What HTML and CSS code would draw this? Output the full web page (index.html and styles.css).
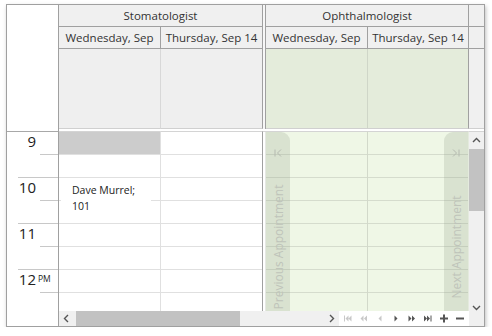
FILE: index.html
```html
<!DOCTYPE html>
<html lang="en">
<head>
    <meta charset="UTF-8">
    <title>Scheduler</title>
    <link rel="stylesheet" href="styles.css">
</head>
<body>
    <div class="scheduler">
        <div class="head">
            <div class="ruler-head"></div>
            <div class="res res-stom">Stomatologist</div>
            <div class="res-gap"></div>
            <div class="res res-oph">Ophthalmologist</div>
            <div class="sb-cell sb-r1"></div>

            <div class="date d1">Wednesday, Sep</div>
            <div class="date d2 edge">Thursday, Sep 14</div>
            <div class="date d3">Wednesday, Sep</div>
            <div class="date d4 edge">Thursday, Sep 14</div>
            <div class="sb-cell sb-r2"></div>

            <div class="allday a1"></div>
            <div class="allday a2 edge"></div>
            <div class="allday a3 green"></div>
            <div class="allday a4 green edge"></div>
            <div class="sb-cell sb-r3"></div>
        </div>

        <div class="body">
            <div class="ruler">
                <div class="hour">
                    <div class="hour-top"><span class="num">9</span></div>
                </div>
                <div class="hour">
                    <div class="hour-top"><span class="num">10</span></div>
                </div>
                <div class="hour">
                    <div class="hour-top"><span class="num">11</span></div>
                </div>
                <div class="hour">
                    <div class="hour-top"><span class="num">12</span><span class="ampm">PM</span></div>
                </div>
            </div>

            <div class="col">
                <div class="slot selected"></div>
                <div class="slot"></div>
                <div class="slot"></div>
                <div class="slot"></div>
                <div class="slot"></div>
                <div class="slot"></div>
                <div class="slot"></div>
                <div class="slot"></div>
                <div class="appt">Dave Murrel;<br>101</div>
            </div>
            <div class="col edge">
                <div class="slot"></div>
                <div class="slot"></div>
                <div class="slot"></div>
                <div class="slot"></div>
                <div class="slot"></div>
                <div class="slot"></div>
                <div class="slot"></div>
                <div class="slot"></div>
            </div>
            <div class="col-gap"></div>
            <div class="col green">
                <div class="slot"></div>
                <div class="slot"></div>
                <div class="slot"></div>
                <div class="slot"></div>
                <div class="slot"></div>
                <div class="slot"></div>
                <div class="slot"></div>
                <div class="slot"></div>
            </div>
            <div class="col green last">
                <div class="slot"></div>
                <div class="slot"></div>
                <div class="slot"></div>
                <div class="slot"></div>
                <div class="slot"></div>
                <div class="slot"></div>
                <div class="slot"></div>
                <div class="slot"></div>
            </div>
            <div class="vscroll">
                <svg class="arrow" width="15" height="16" viewBox="0 0 15 16"><polyline points="4,10 7.5,6.5 11,10" fill="none" stroke="#555" stroke-width="1.4"/></svg>
                <div class="vthumb"></div>
                <div class="vspace"></div>
                <svg class="arrow" width="15" height="16" viewBox="0 0 15 16"><polyline points="4,6 7.5,9.5 11,6" fill="none" stroke="#555" stroke-width="1.4"/></svg>
            </div>

            <div class="nav-tab prev">
                <svg width="10" height="10" viewBox="0 0 10 10"><path d="M2 1.5v7M8 1.5L4.5 5 8 8.5" fill="none" stroke="#b5bab0" stroke-width="1"/></svg>
                <span class="tab-text">Previous Appointment</span>
            </div>
            <div class="nav-tab next">
                <svg width="10" height="10" viewBox="0 0 10 10"><path d="M8 1.5v7M2 1.5L5.5 5 2 8.5" fill="none" stroke="#b5bab0" stroke-width="1"/></svg>
                <span class="tab-text">Next Appointment</span>
            </div>
        </div>

        <div class="foot">
            <div class="ruler-foot"></div>
            <div class="track">
                <svg class="harrow" width="15" height="15" viewBox="0 0 15 15"><polyline points="9,4 5.5,7.5 9,11" fill="none" stroke="#555" stroke-width="1.4"/></svg>
                <div class="hthumb"></div>
                <div class="hspace"></div>
                <svg class="harrow" width="15" height="15" viewBox="0 0 15 15"><polyline points="6,4 9.5,7.5 6,11" fill="none" stroke="#555" stroke-width="1.4"/></svg>
            </div>
            <div class="nav">
                <svg width="16" height="15" viewBox="0 0 16 15"><path d="M4 4.5h1v6H4zM8.5 4.5v6L5.5 7.5zM11.5 4.5v6L8.5 7.5z" fill="#c8c8c8"/></svg>
                <svg width="16" height="15" viewBox="0 0 16 15"><path d="M7.5 4.5v6L4.5 7.5zM11 4.5v6L8 7.5z" fill="#c8c8c8"/></svg>
                <svg width="16" height="15" viewBox="0 0 16 15"><path d="M9.5 4.5v6L6.5 7.5z" fill="#c8c8c8"/></svg>
                <svg width="16" height="15" viewBox="0 0 16 15"><path d="M6.5 4.5v6L9.5 7.5z" fill="#555"/></svg>
                <svg width="16" height="15" viewBox="0 0 16 15"><path d="M4.5 4.5v6L7.5 7.5zM8 4.5v6L11 7.5z" fill="#555"/></svg>
                <svg width="16" height="15" viewBox="0 0 16 15"><path d="M4 4.5v6L7 7.5zM7 4.5v6L10 7.5zM10.5 4.5h1v6h-1z" fill="#555"/></svg>
                <svg width="16" height="15" viewBox="0 0 16 15"><path d="M4 6.5h8v2H4zM7 3.5h2v8H7z" fill="#555"/></svg>
                <svg width="16" height="15" viewBox="0 0 16 15"><path d="M4 6.5h8v2H4z" fill="#555"/></svg>
            </div>
            <div class="corner"></div>
        </div>
    </div>
</body>
</html>
```

FILE: styles.css
```css
body {
    margin: 0;
    padding: 4px 0 0 6px;
    background: #fff;
    font-family: "Open Sans", "Noto Sans", sans-serif;
    color: #333;
}
.scheduler {
    width: 479px;
    height: 323px;
    box-sizing: border-box;
    border: 1px solid #a0a0a0;
    box-shadow: 1px 2px 4px rgba(0, 0, 0, 0.25);
    background: #fff;
}

/* header */
.head {
    display: grid;
    grid-template-columns: 52px 102px 102px 3px 102px 101px 15px;
    grid-template-rows: 22px 22px 80px 2px;
}
.head > div {
    box-sizing: border-box;
}
.ruler-head {
    grid-column: 1;
    grid-row: 1 / 5;
    border-right: 1px solid #a0a0a0;
}
.res {
    grid-row: 1;
    background: #f0f0f0;
    border-right: 1px solid #a0a0a0;
    border-bottom: 1px solid #a0a0a0;
    font-size: 11.5px;
    line-height: 21px;
    text-align: center;
}
.res-stom { grid-column: 2 / 4; }
.res-oph { grid-column: 5 / 7; }
.res-gap {
    grid-column: 4;
    grid-row: 1 / 4;
    background: #f7f7f7;
    border-right: 1px solid #a0a0a0;
}
.sb-cell {
    grid-column: 7;
    background: #f0f0f0;
    border-bottom: 1px solid #a0a0a0;
}
.sb-r1 { grid-row: 1; }
.sb-r2 { grid-row: 2; }
.sb-r3 { grid-row: 3; border-bottom: 1px solid #d0d0d0; }
.date {
    grid-row: 2;
    background: #f0f0f0;
    border-right: 1px solid #a0a0a0;
    border-bottom: 1px solid #a0a0a0;
    font-size: 11.5px;
    line-height: 21px;
    text-align: center;
    white-space: nowrap;
    overflow: hidden;
}
.d1, .a1 { grid-column: 2; }
.d2, .a2 { grid-column: 3; }
.d3, .a3 { grid-column: 5; }
.d4, .a4 { grid-column: 6; }
.allday {
    grid-row: 3;
    background: #efefef;
    border-right: 1px solid #d8d8d8;
    border-bottom: 1px solid #d0d0d0;
}
.allday.green {
    background: #e4ecdb;
    border-right-color: #cfd6c8;
}
.allday.edge {
    border-right-color: #a0a0a0;
}

/* time area */
.body {
    position: relative;
    display: grid;
    grid-template-columns: 52px 102px 102px 3px 102px 101px 15px;
    height: 180px;
    overflow: hidden;
}
.body > div {
    box-sizing: border-box;
}
.ruler {
    border-top: 1px solid #a8a8a8;
    border-right: 1px solid #a0a0a0;
}
.hour {
    height: 46px;
    box-sizing: border-box;
    margin-left: 11px;
    border-bottom: 1px solid #c8c8c8;
}
.hour-top {
    display: flex;
    height: 23px;
    box-sizing: border-box;
    padding-top: 2px;
    background: linear-gradient(#c8c8c8, #c8c8c8) no-repeat right bottom / 18px 1px;
}
.num {
    width: 18px;
    text-align: right;
    font-size: 15px;
    line-height: 1;
    color: #222;
}
.ampm {
    font-size: 8.5px;
    line-height: 1;
    margin: 3px 0 0 2px;
    color: #222;
}
.col {
    position: relative;
    border-top: 1px solid #d4d4d4;
    border-right: 1px solid #e0e0e0;
}
.col.edge {
    border-right-color: #a0a0a0;
}
.col.green {
    background: #eff7e6;
    border-right-color: #d2d9ca;
}
.col.last {
    border-right-color: #e4eade;
}
.slot {
    height: 22px;
    border-bottom: 1px solid #e0e0e0;
}
.col.green .slot {
    border-bottom-color: #d5dccd;
}
.slot.selected {
    background: #cccccc;
}
.col-gap {
    border-top: 1px solid #d4d4d4;
}
.appt {
    position: absolute;
    left: 2px;
    top: 46px;
    width: 90px;
    height: 44px;
    box-sizing: border-box;
    padding: 4px 0 0 11px;
    background: #fff;
    font-size: 10.5px;
    line-height: 16px;
    color: #222;
}
.vscroll {
    display: flex;
    flex-direction: column;
    background: #f0f0f0;
    border-top: 1px solid #d4d4d4;
}
.vscroll .arrow {
    flex: none;
}
.vthumb {
    height: 62px;
    margin-top: 1px;
    background: #c2c2c2;
}
.vspace {
    flex: 1;
}
.nav-tab {
    position: absolute;
    top: 1px;
    bottom: 0;
    width: 25px;
    display: flex;
    flex-direction: column;
    align-items: center;
    padding-top: 16px;
    box-sizing: border-box;
    background: rgba(150, 162, 142, 0.25);
}
.nav-tab.prev {
    left: 258px;
    border-radius: 0 9px 0 0;
}
.nav-tab.next {
    left: 437px;
    width: 24px;
    border-radius: 9px 0 0 0;
}
.tab-text {
    position: absolute;
    top: 115px;
    left: 50%;
    transform: translate(-50%, -50%) rotate(-90deg);
    white-space: nowrap;
    font-size: 12px;
    color: #bfc4ba;
}

/* footer */
.foot {
    display: flex;
    height: 15px;
}
.ruler-foot {
    width: 52px;
    box-sizing: border-box;
    border-right: 1px solid #a0a0a0;
}
.track {
    display: flex;
    width: 280px;
    background: #f0f0f0;
}
.harrow {
    flex: none;
}
.hthumb {
    width: 164px;
    margin-left: 2px;
    background: #c2c2c2;
}
.hspace {
    flex: 1;
}
.nav {
    display: flex;
    width: 130px;
    background: #fff;
    padding-left: 1px;
    box-sizing: border-box;
}
.corner {
    width: 15px;
    background: #f0f0f0;
}
```
